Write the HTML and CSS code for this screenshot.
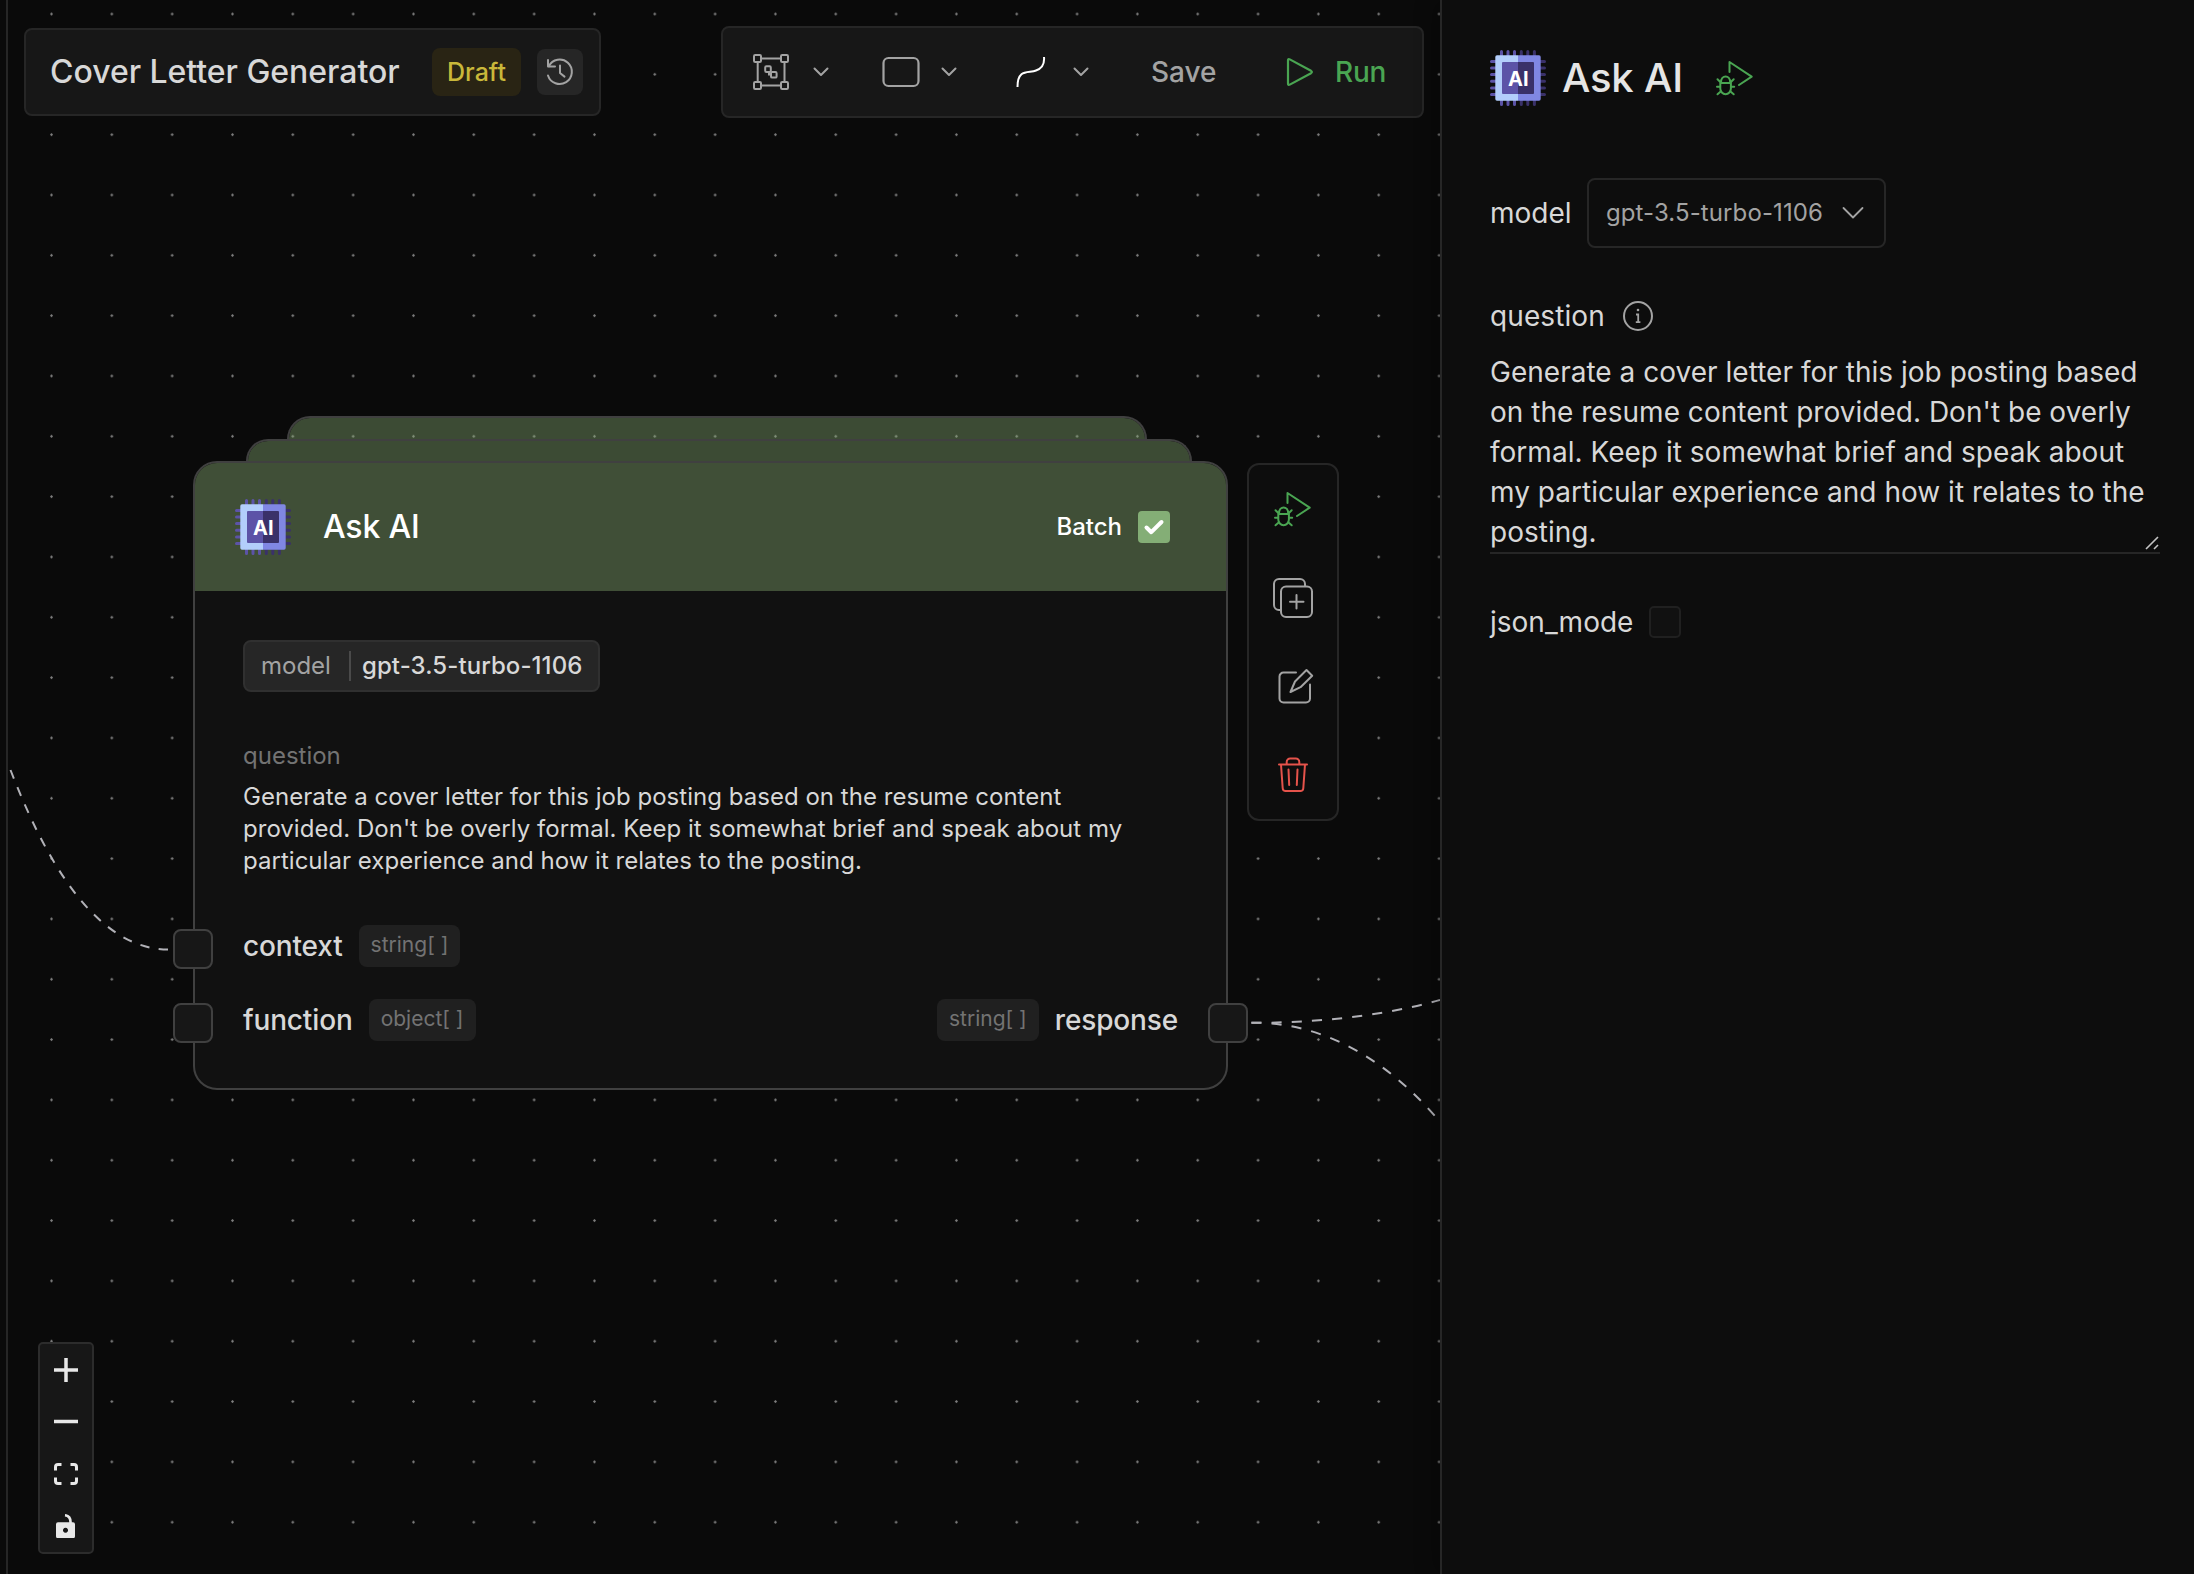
FILE: index.html
```html
<!DOCTYPE html>
<html lang="en">
<head>
<meta charset="utf-8">
<title>Cover Letter Generator</title>
<link rel="stylesheet" href="styles.css">
</head>
<body>
<svg class="defs" width="0" height="0" aria-hidden="true">
  <symbol id="chip" viewBox="0 0 56 56">
    <path d="M11.5 1.5v5M18 1.5v5M24.5 1.5v5M11.5 49.5v5M18 49.5v5M24.5 49.5v5M1.5 11.5h5M1.5 18h5M1.5 24.5h5M1.5 31.2h5M1.5 38h5M1.5 44.5h5" stroke="#5c53a7" stroke-width="3" stroke-linecap="round"/>
    <path d="M31.3 1.5v5M37.8 1.5v5M44.4 1.5v5M31.3 49.5v5M37.8 49.5v5M44.4 49.5v5M49.5 11.5h5M49.5 18h5M49.5 24.5h5M49.5 31.2h5M49.5 38h5M49.5 44.5h5" stroke="#3a3169" stroke-width="3" stroke-linecap="round"/>
    <path d="M28 5.300H7a1.700 1.700 0 0 0-1.700 1.700v42a1.700 1.700 0 0 0 1.700 1.700h21z" fill="#b3cefb"/>
    <path d="M28 5.300h21a1.700 1.700 0 0 1 1.700 1.700v42a1.700 1.700 0 0 1-1.700 1.700H28z" fill="#8087e3"/>
    <path d="M28 12H13a1 1 0 0 0-1 1v30a1 1 0 0 0 1 1h15z" fill="#5c53a7"/>
    <path d="M28 12h15a1 1 0 0 1 1 1v30a1 1 0 0 1-1 1H28z" fill="#3a3169"/>
    <text x="28.300" y="36" text-anchor="middle" class="chip-text">AI</text>
  </symbol>
  <symbol id="debug" viewBox="0 0 38 36">
    <g fill="none" stroke="#4aa552" stroke-width="2" stroke-linecap="round" stroke-linejoin="round">
      <path d="M13.500 12V2L35.700 16.700L23 25"/>
      <path d="M4.300 23h10.600v5.500a5.300 5.700 0 0 1-10.600 0z"/>
      <path d="M5 22.500c0-8 9.200-8 9.200 0"/>
      <path d="M4.300 22L1.500 19.300M14.900 22l2.800-2.700M4 26.700H1M15.200 26.700h3M5 31.300L1.500 34.300M14.200 31.300l3.500 3"/>
    </g>
  </symbol>
  <symbol id="chev" viewBox="0 0 16 10">
    <path d="M1.500 1.500L8 8L14.500 1.500" fill="none" stroke="#a3a3a3" stroke-width="2" stroke-linecap="round" stroke-linejoin="round"/>
  </symbol>
</svg>

<div class="app">
  <main class="canvas">
    <svg class="edges" width="1432" height="1574" viewBox="8 0 1432 1574">
      <path d="M168 949.500C84 949.500 32 825 10.500 770" pathLength="270" stroke-dasharray="10 10"/>
      <path d="M1251.400 1022.800C1310 1023 1380 1017 1440 1000" stroke-dasharray="10.100 10.100"/>
      <path d="M1251.400 1022.700C1312 1022 1376 1049 1435 1116" stroke-dasharray="10.100 10.100"/>
    </svg>

    <header class="topbar">
      <div class="title-box">
        <span class="title">Cover Letter Generator</span>
        <span class="draft">Draft</span>
        <button class="history" aria-label="History">
          <svg width="28" height="32" viewBox="0 0 28 32" fill="none" stroke="#a3a3a3" stroke-width="2" stroke-linecap="round" stroke-linejoin="round">
            <path d="M2 4v6.500h7"/><path d="M2.800 10.200A12.200 12.200 0 1 1 2 19.500"/><path d="M14 9.500v7.500l4.500 3.600"/>
          </svg>
        </button>
      </div>
      <div class="tools">
        <button class="tool t1" aria-label="Group">
          <svg width="38" height="38" viewBox="0 0 38 38" fill="none" stroke="#a3a3a3" stroke-width="2">
            <path d="M9.500 5.500h19M9.500 32.500h19M5.700 9.500v19M32.500 9.500v19"/>
            <rect x="2" y="2" width="7" height="7" rx="1.200"/><rect x="29" y="2" width="7" height="7" rx="1.200"/>
            <rect x="2" y="29" width="7" height="7" rx="1.200"/><rect x="29" y="29" width="7" height="7" rx="1.200"/>
            <rect x="13.200" y="13.300" width="5.600" height="5.600" rx="1.200"/><rect x="19" y="19" width="5.600" height="5.600" rx="1.200"/>
            <path d="M17 19v2.500h2"/>
          </svg>
          <svg width="16" height="10"><use href="#chev"/></svg>
        </button>
        <button class="tool t2" aria-label="Shape">
          <svg width="38" height="32" viewBox="0 0 38 32"><rect x="1.500" y="2" width="35" height="28" rx="5" fill="none" stroke="#a3a3a3" stroke-width="2.200"/></svg>
          <svg width="16" height="10"><use href="#chev"/></svg>
        </button>
        <button class="tool t3" aria-label="Line">
          <svg width="30" height="32" viewBox="0 0 30 32"><path d="M1.500 31C1.500 12 13 17.500 20 14.500Q29 11.500 28 1" fill="none" stroke="#fff" stroke-width="2"/></svg>
          <svg width="16" height="10"><use href="#chev"/></svg>
        </button>
        <button class="save">Save</button>
        <button class="run">
          <svg width="28" height="30" viewBox="0 0 28 30"><path d="M2 3.400v23.200q0 2 1.800 1L25 16.200q1.800-1.200 0-2.400L3.800 2.400Q2 1.400 2 3.400z" fill="none" stroke="#4aa552" stroke-width="2.200" stroke-linejoin="round"/></svg>
          <span>Run</span>
        </button>
      </div>
    </header>

    <div class="layer layer-back"></div>
    <div class="layer layer-mid"></div>
    <article class="node">
      <div class="node-head">
        <svg width="56" height="56"><use href="#chip"/></svg>
        <h2>Ask AI</h2>
        <label>Batch
          <span class="check"><svg width="32" height="32" viewBox="0 0 32 32"><path d="M8.500 16.500L13.300 21.200L23.500 11" fill="none" stroke="#fff" stroke-width="4" stroke-linecap="round" stroke-linejoin="round"/></svg></span>
        </label>
      </div>
      <div class="node-body">
        <div class="param"><span class="key">model</span><span class="val">gpt-3.5-turbo-1106</span></div>
        <div class="q-label">question</div>
        <p class="q-text">Generate a cover letter for this job posting based on the resume content provided. Don't be overly formal. Keep it somewhat brief and speak about my particular experience and how it relates to the posting.</p>
        <div class="port-row first">
          <i class="handle in"></i><span>context</span><code>string[ ]</code>
        </div>
        <div class="port-row">
          <i class="handle in"></i><span>function</span><code>object[ ]</code>
          <code class="push">string[ ]</code><span>response</span><i class="handle out"></i>
        </div>
      </div>
    </article>

    <nav class="actions">
      <svg width="38" height="36"><use href="#debug"/></svg>
      <svg width="42" height="42" viewBox="0 0 42 42" fill="none" stroke="#a3a3a3" stroke-width="2" stroke-linecap="round">
        <path d="M8 33H7a5 5 0 0 1-5-5V7a5 5 0 0 1 5-5h21a5 5 0 0 1 5 5v1.500"/><rect x="9" y="9.500" width="31" height="30.500" rx="5"/><path d="M24.500 18v13.500M18 24.700h13.500"/>
      </svg>
      <svg class="edit" width="38" height="38" viewBox="0 0 38 38" fill="none" stroke="#a3a3a3" stroke-width="2" stroke-linecap="round" stroke-linejoin="round">
        <path d="M20 5.500H7.500a4 4 0 0 0-4 4v22a4 4 0 0 0 4 4h22.500a4 4 0 0 0 4-4V17.500"/><path d="M30.500 3l5.700 5.700L24.500 20.200L14.500 25l4.500-10.500z"/>
      </svg>
      <svg width="32" height="38" viewBox="0 0 32 38" fill="none" stroke="#e5534b" stroke-width="2" stroke-linecap="round" stroke-linejoin="round">
        <path d="M2 8.500h28M4 8.500l1.700 23.700a3 3 0 0 0 3 2.800h14.600a3 3 0 0 0 3-2.800L28 8.500M9.700 8v-2a3.500 3.500 0 0 1 3.500-3.500h5.600a3.500 3.500 0 0 1 3.500 3.500v2M11.500 13.500l.7 15.500M20.500 13.500l-.7 15.500"/>
      </svg>
    </nav>

    <nav class="controls">
      <svg width="24" height="24" viewBox="0 0 24 24"><path d="M12 0v24M0 12h24" stroke="#e8e8e8" stroke-width="3.500"/></svg>
      <svg width="24" height="24" viewBox="0 0 24 24"><path d="M0 11.500h24" stroke="#e8e8e8" stroke-width="3.500"/></svg>
      <svg width="24" height="24" viewBox="0 0 24 24"><path d="M1.500 8.500V5q0-2.500 2.500-2.500h3.500M16.500 2.500H20q2.500 0 2.500 2.500v3.500M22.500 15.500V19q0 2.500-2.500 2.500h-3.500M7.500 21.500H4q-2.500 0-2.500-2.500v-3.500" fill="none" stroke="#e8e8e8" stroke-width="3"/></svg>
      <svg width="24" height="24" viewBox="0 0 24 24"><path d="M11 1.200q6 .8 5.500 8" fill="none" stroke="#e8e8e8" stroke-width="2.600"/><path fill-rule="evenodd" fill="#e8e8e8" d="M4 8.300h15a2 2 0 0 1 2 2v12a2 2 0 0 1-2 2H4a2 2 0 0 1-2-2v-12a2 2 0 0 1 2-2zM11.500 13.700a2.500 2.500 0 1 0 .01 0z"/></svg>
    </nav>
  </main>

  <aside class="panel">
    <div class="panel-head">
      <svg width="56" height="56"><use href="#chip"/></svg>
      <h1>Ask AI</h1>
      <svg class="dbg" width="38" height="36"><use href="#debug"/></svg>
    </div>
    <div class="field-row model-row">
      <span>model</span>
      <div class="select"><span>gpt-3.5-turbo-1106</span>
        <svg width="22" height="14" viewBox="0 0 22 14"><path d="M1.500 2L11 11.500L20.500 2" fill="none" stroke="#a3a3a3" stroke-width="1.800" stroke-linecap="round" stroke-linejoin="round"/></svg>
      </div>
    </div>
    <div class="field-row question-row">
      <span>question</span>
      <svg width="32" height="32" viewBox="0 0 32 32" fill="none" stroke="#a3a3a3" stroke-width="2"><circle cx="16" cy="16" r="14"/><path d="M14 14.500h2.200v7.500M13.800 22.200h4.600" stroke-width="1.800"/><circle cx="16" cy="10" r="1.300" fill="#a3a3a3" stroke="none"/></svg>
    </div>
    <div class="textarea">
      <p>Generate a cover letter for this job posting based on the resume content provided. Don't be overly formal. Keep it somewhat brief and speak about my particular experience and how it relates to the posting.</p>
      <svg class="grip" width="16" height="16" viewBox="0 0 16 16"><path d="M2 14L14 2M10 14l4-4" stroke="#c4c4c4" stroke-width="1.600"/></svg>
    </div>
    <div class="field-row json-row"><span>json_mode</span><i class="box"></i></div>
  </aside>
</div>
</body>
</html>
```
FILE: styles.css
```css
* { box-sizing: border-box; }
body {
  margin: 0;
  width: 2194px;
  height: 1574px;
  overflow: hidden;
  background: #0a0a0a;
  color: #d8d8d8;
  font-family: Inter, "Liberation Sans", sans-serif;
  font-size: 28px;
  line-height: 40px;
}
h1, h2, p { margin: 0; font-weight: 500; }
svg { display: block; flex: none; }
button { padding: 0; border: 0; background: none; color: inherit; font: inherit; }
.defs { display: none; }
.chip-text { font: 700 20px Inter, sans-serif; fill: #fff; }

.app { display: flex; height: 1574px; padding-left: 6px; }
.canvas {
  position: relative;
  flex: 1;
  overflow: hidden;
  border-left: 2px solid #262626;
  background: radial-gradient(circle at 30.170px 30.170px, #808080 0.900px, transparent 1.500px) 13.330px -16.170px / 60.333px 60.333px #0a0a0a;
}
.edges { position: absolute; left: 0; top: 0; fill: none; stroke: #b1b1b7; stroke-width: 2; }

.topbar {
  position: absolute;
  inset: 26px 16px auto 16px;
  display: flex;
  justify-content: space-between;
  align-items: flex-start;
}
.title-box, .tools {
  display: flex;
  align-items: center;
  border: 2px solid #262626;
  border-radius: 8px;
  background: #171717;
}
.title-box { width: 577px; height: 88px; margin-top: 2px; padding: 0 16px 0 24px; }
.title { flex: 1; font-size: 32px; font-weight: 500; white-space: nowrap; letter-spacing: -0.03px; }
.draft {
  width: 89px;
  height: 48px;
  border-radius: 8px;
  background: #292414;
  color: #c9b83a;
  font-size: 25px;
  font-weight: 500;
  line-height: 48px;
  text-align: center;
}
.history {
  display: grid;
  place-items: center;
  width: 46px;
  height: 46px;
  margin-left: 16px;
  border-radius: 8px;
  background: #262626;
}
.tools { width: 703px; height: 92px; padding: 0 36px 0 29px; color: #a3a3a3; }
.tool { display: flex; align-items: center; }
.t1 { gap: 23px; }
.t2 { gap: 21px; margin-left: 53px; }
.t3 { gap: 27px; margin-left: 59px; }
.save { margin-left: 62px; font-weight: 500; }
.run { display: flex; align-items: center; gap: 21px; margin-left: auto; color: #4aa552; font-weight: 500; letter-spacing: -0.3px; }

.layer {
  position: absolute;
  border: 2px solid #404040;
  border-bottom: 0;
  border-radius: 24px 24px 0 0;
  background: rgba(132, 168, 113, 0.415);
  background-clip: padding-box;
}
.layer-back { left: 279px; top: 416px; width: 860px; height: 23px; }
.layer-mid { left: 238px; top: 439px; width: 946px; height: 22px; }
.node {
  position: absolute;
  left: 185px;
  top: 461px;
  width: 1035px;
  height: 629px;
  border: 2px solid #404040;
  border-radius: 24px;
  background: #111;
}
.node-head {
  display: flex;
  align-items: center;
  gap: 32px;
  height: 128px;
  padding: 0 56px 0 40px;
  border-radius: 22px 22px 0 0;
  background: #404f37;
  color: #fff;
}
.node-head h2 { flex: 1; font-size: 32px; letter-spacing: -0.2px; }
.node-head label { display: flex; align-items: center; gap: 16px; font-size: 24px; font-weight: 500; }
.check { border-radius: 4px; background: #84ae76; }
.node-body { padding: 49px 48px 0; }
.param {
  display: flex;
  align-items: center;
  width: 357px;
  height: 52px;
  padding-left: 16px;
  border: 2px solid #303030;
  border-radius: 8px;
  background: #262626;
  font-size: 24px;
  font-weight: 500;
  line-height: 30px;
}
.key { width: 90px; border-right: 2px solid #4a4a4a; color: #a3a3a3; font-weight: 400; }
.val { padding-left: 11px; letter-spacing: 0.08px; }
.q-label { margin-top: 48px; color: #737373; font-size: 24px; line-height: 32px; }
.q-text { width: 900px; margin-top: 9px; font-size: 24px; font-weight: 400; line-height: 32px; letter-spacing: 0.03px; }
.port-row { position: relative; display: flex; align-items: center; height: 42px; margin-top: 32px; font-weight: 500; letter-spacing: -0.15px; }
.port-row.first { margin-top: 48px; }
.port-row code {
  height: 42px;
  margin: 0 16px;
  padding: 0 12px;
  border-radius: 8px;
  background: #202020;
  color: #737373;
  font: 400 21px/40px Inter, sans-serif;
  letter-spacing: 0;
}
.port-row .push { margin-left: auto; }
.handle {
  position: absolute;
  top: 4px;
  width: 40px;
  height: 40px;
  border: 2px solid #404040;
  border-radius: 8px;
  background: #171717;
}
.in { left: -70px; }
.out { right: -70px; }

.actions {
  position: absolute;
  left: 1239px;
  top: 463px;
  display: flex;
  flex-direction: column;
  align-items: center;
  justify-content: space-between;
  width: 92px;
  height: 358px;
  padding: 26px 0 25px;
  border: 2px solid #262626;
  border-radius: 12px;
  background: #0d0d0d;
}
.actions .edit { margin: -3px 0 1px 3px; }
.controls {
  position: absolute;
  left: 30px;
  top: 1342px;
  display: flex;
  flex-direction: column;
  align-items: center;
  gap: 28px;
  width: 56px;
  height: 212px;
  padding-top: 14px;
  border: 2px solid #2c2c2c;
  border-radius: 5px;
  background: #171717;
}

.panel {
  position: relative;
  width: 754px;
  padding: 50px 34px 0 48px;
  border-left: 2px solid #262626;
  background: #0d0d0d;
  box-shadow: -4px 0 20px rgba(0, 0, 0, 0.3);
}
.panel-head { display: flex; align-items: center; height: 56px; }
.panel-head h1 { margin-left: 16px; color: #e5e5e5; font-size: 40px; letter-spacing: -0.2px; }
.dbg { margin-left: 33px; }
.field-row { display: flex; align-items: center; }
.model-row { height: 70px; margin-top: 72px; }
.model-row > span { width: 97px; }
.select {
  display: flex;
  align-items: center;
  justify-content: space-between;
  width: 299px;
  height: 70px;
  padding: 0 20px 0 17px;
  border: 2px solid #262626;
  border-radius: 8px;
  color: #a3a3a3;
  font-size: 24px;
  letter-spacing: 0.1px;
}
.question-row { height: 40px; margin-top: 48px; }
.question-row > span { width: 132px; letter-spacing: 0.1px; }
.textarea { position: relative; height: 202px; margin-top: 16px; border-bottom: 2px solid #262626; }
.textarea p { font-weight: 400; letter-spacing: 0.02px; }
.grip { position: absolute; right: 0; bottom: 1px; }
.json-row { height: 40px; margin-top: 48px; }
.json-row > span { width: 159px; }
.box { width: 32px; height: 32px; border: 2px solid #202020; border-radius: 5px; background: #111; }
```
